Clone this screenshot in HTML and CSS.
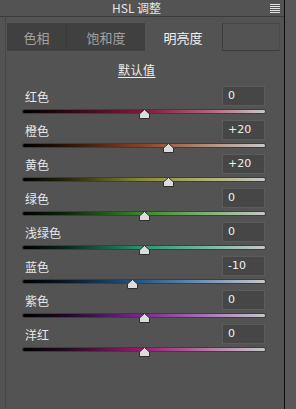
FILE: index.html
```html
<!DOCTYPE html>
<html lang="zh">

<head>
    <meta charset="UTF-8">
    <meta name="viewport" content="width=device-width, initial-scale=1.0">
    <title>HSL 调整</title>
    <link rel="stylesheet" href="styles.css">
</head>

<body>
    <div class="panel">
        <div class="titlebar">
            <span class="title">HSL 调整</span>
            <svg class="menu" width="10" height="9" viewBox="0 0 10 9">
                <rect x="0" y="0" width="10" height="1" fill="#e2e2e2" />
                <rect x="0" y="2" width="10" height="1" fill="#e2e2e2" />
                <rect x="0" y="4" width="10" height="1" fill="#e2e2e2" />
                <rect x="0" y="6" width="10" height="1" fill="#e2e2e2" />
                <rect x="0" y="8" width="10" height="1" fill="#e2e2e2" />
            </svg>
        </div>

        <div class="main">
            <div class="tabs">
                <div class="tab tab-hue">色相</div>
                <div class="tab tab-sat">饱和度</div>
                <div class="tab tab-lum active">明亮度</div>
                <div class="tab-empty"></div>
            </div>

            <div class="default"><span>默认值</span></div>

            <div class="row">
                <div class="row-top">
                    <span class="label">红色</span>
                    <div class="value">0</div>
                </div>
                <div class="track red">
                    <svg class="thumb" style="left: 121px" width="11" height="10" viewBox="0 0 11 10"><polygon points="5.5,0.5 10.5,5 10.5,9.5 0.5,9.5 0.5,5" /></svg>
                </div>
            </div>

            <div class="row">
                <div class="row-top">
                    <span class="label">橙色</span>
                    <div class="value">+20</div>
                </div>
                <div class="track orange">
                    <svg class="thumb" style="left: 145px" width="11" height="10" viewBox="0 0 11 10"><polygon points="5.5,0.5 10.5,5 10.5,9.5 0.5,9.5 0.5,5" /></svg>
                </div>
            </div>

            <div class="row">
                <div class="row-top">
                    <span class="label">黄色</span>
                    <div class="value">+20</div>
                </div>
                <div class="track yellow">
                    <svg class="thumb" style="left: 145px" width="11" height="10" viewBox="0 0 11 10"><polygon points="5.5,0.5 10.5,5 10.5,9.5 0.5,9.5 0.5,5" /></svg>
                </div>
            </div>

            <div class="row">
                <div class="row-top">
                    <span class="label">绿色</span>
                    <div class="value">0</div>
                </div>
                <div class="track green">
                    <svg class="thumb" style="left: 121px" width="11" height="10" viewBox="0 0 11 10"><polygon points="5.5,0.5 10.5,5 10.5,9.5 0.5,9.5 0.5,5" /></svg>
                </div>
            </div>

            <div class="row">
                <div class="row-top">
                    <span class="label">浅绿色</span>
                    <div class="value">0</div>
                </div>
                <div class="track aqua">
                    <svg class="thumb" style="left: 121px" width="11" height="10" viewBox="0 0 11 10"><polygon points="5.5,0.5 10.5,5 10.5,9.5 0.5,9.5 0.5,5" /></svg>
                </div>
            </div>

            <div class="row">
                <div class="row-top">
                    <span class="label">蓝色</span>
                    <div class="value">-10</div>
                </div>
                <div class="track blue">
                    <svg class="thumb" style="left: 109px" width="11" height="10" viewBox="0 0 11 10"><polygon points="5.5,0.5 10.5,5 10.5,9.5 0.5,9.5 0.5,5" /></svg>
                </div>
            </div>

            <div class="row">
                <div class="row-top">
                    <span class="label">紫色</span>
                    <div class="value">0</div>
                </div>
                <div class="track purple">
                    <svg class="thumb" style="left: 121px" width="11" height="10" viewBox="0 0 11 10"><polygon points="5.5,0.5 10.5,5 10.5,9.5 0.5,9.5 0.5,5" /></svg>
                </div>
            </div>

            <div class="row">
                <div class="row-top">
                    <span class="label">洋红</span>
                    <div class="value">0</div>
                </div>
                <div class="track magenta">
                    <svg class="thumb" style="left: 121px" width="11" height="10" viewBox="0 0 11 10"><polygon points="5.5,0.5 10.5,5 10.5,9.5 0.5,9.5 0.5,5" /></svg>
                </div>
            </div>
        </div>
    </div>
</body>

</html>
```

FILE: styles.css
```css
* {
    margin: 0;
    padding: 0;
    box-sizing: border-box;
}

body {
    width: 296px;
    height: 409px;
    overflow: hidden;
    background-color: #585858;
    font-family: "Noto Sans CJK SC", "DejaVu Sans", sans-serif;
}

.panel {
    width: 285px;
    height: 409px;
    background-color: #535353;
    border-right: 1px solid #0c0c0c;
}

.titlebar {
    display: flex;
    align-items: center;
    height: 17px;
    border-bottom: 1px solid #3b3b3b;
}

.title {
    margin-left: 112px;
    font-size: 12px;
    line-height: 16px;
    color: #e6e6e6;
}

.menu {
    margin-left: auto;
    margin-right: 4px;
}

.main {
    height: 392px;
    margin-left: 5px;
    padding-top: 6px;
    border-left: 1px solid #474747;
}

.tabs {
    display: flex;
    height: 28px;
    margin-left: 1px;
}

.tab {
    display: flex;
    justify-content: center;
    align-items: center;
    font-size: 13px;
    color: #a2a2a2;
    background-color: #404040;
}

.tab-hue {
    width: 60px;
    border-right: 1px solid #3a3a3a;
}

.tab-sat {
    width: 78px;
}

.tab-lum {
    width: 76px;
}

.tab.active {
    color: #f2f2f2;
    background-color: #535353;
}

.tab-empty {
    width: 58px;
    margin-left: 1px;
    border: 1px solid #3d3d3d;
    border-top-color: #444444;
    border-right-color: #4a4a4a;
}

.default {
    height: 16px;
    margin-top: 11px;
    margin-bottom: 8px;
    padding-left: 112px;
    font-size: 12px;
    line-height: 16px;
    color: #ececec;
}

.default span {
    letter-spacing: 0.5px;
    text-decoration: underline;
    text-underline-offset: 2px;
}

.row {
    height: 34px;
    padding: 0 19px 0 17px;
}

.row-top {
    display: flex;
    justify-content: space-between;
    align-items: center;
    height: 20px;
}

.label {
    margin-left: 2px;
    font-size: 12px;
    color: #e8e8e8;
}

.value {
    width: 43px;
    height: 20px;
    padding-left: 5px;
    font-family: "DejaVu Sans", sans-serif;
    font-size: 11px;
    line-height: 18px;
    color: #f0f0f0;
    background-color: #464646;
    border: 1px solid #5c5c5c;
}

.track {
    position: relative;
    height: 3px;
    margin-top: 4px;
    border-radius: 2px;
    box-shadow: 0 0 0 1px rgba(20, 20, 20, 0.35);
}

.thumb {
    position: absolute;
    top: -1px;
    margin-left: -5px;
}

.thumb polygon {
    fill: #dcdcdc;
    stroke: #2e2e2e;
    stroke-width: 1;
}

.red {
    background: linear-gradient(to right, #000 0%, #2a0a12 18%, #801a36 50%, #b0687a 78%, #c8c8c8 100%);
}

.orange {
    background: linear-gradient(to right, #000 0%, #2a140a 18%, #8a4424 50%, #b49282 78%, #c8c8c8 100%);
}

.yellow {
    background: linear-gradient(to right, #000 0%, #25250c 18%, #8c8c36 50%, #b2b27c 78%, #c8c8c8 100%);
}

.green {
    background: linear-gradient(to right, #000 0%, #0e250c 18%, #3a8a2a 50%, #86b27c 78%, #c8c8c8 100%);
}

.aqua {
    background: linear-gradient(to right, #000 0%, #0a2620 18%, #2a9676 50%, #7cb8a8 78%, #c8c8c8 100%);
}

.blue {
    background: linear-gradient(to right, #000 0%, #0a1826 18%, #2a5a8c 50%, #7c98b8 78%, #c8c8c8 100%);
}

.purple {
    background: linear-gradient(to right, #000 0%, #200a26 18%, #7c2a94 50%, #aa7cb8 78%, #c8c8c8 100%);
}

.magenta {
    background: linear-gradient(to right, #000 0%, #260a1e 18%, #9a1c76 50%, #b87ca8 78%, #c8c8c8 100%);
}
```
